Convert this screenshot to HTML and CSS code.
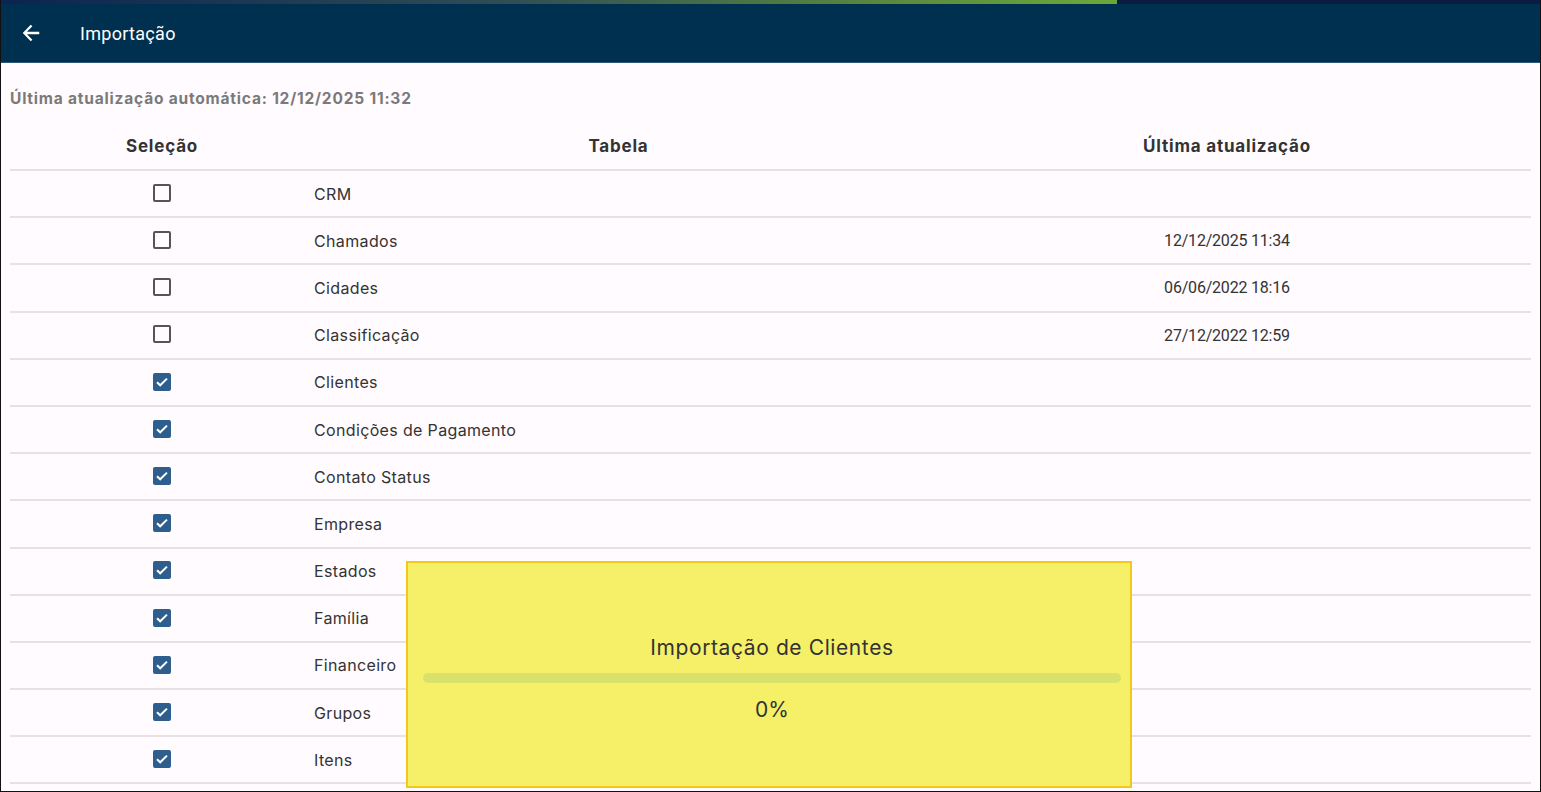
FILE: index.html
```html
<!DOCTYPE html>
<html lang="pt-BR">
<head>
<meta charset="utf-8">
<title>Importação</title>
<link rel="stylesheet" href="styles.css">
</head>
<body>
<div class="frame">
  <header class="appbar">
    <div class="loader"><div class="loader-fill"></div></div>
    <div class="appbar-row">
      <button class="back" aria-label="Voltar">
        <svg width="22" height="22" viewBox="0 0 24 24"><path d="M21 10.6H7.6l5.9-5.9L11.7 3 3 12l8.7 9 1.8-1.7-5.9-5.9H21z" fill="#fff"/></svg>
      </button>
      <h1 class="title">Importação</h1>
    </div>
  </header>
  <main class="content">
    <p class="auto-info">Última atualização automática: 12/12/2025 11:32</p>
    <table class="grid">
      <colgroup><col class="c1"><col class="c2"><col class="c3"></colgroup>
      <thead>
        <tr><th>Seleção</th><th>Tabela</th><th>Última atualização</th></tr>
      </thead>
      <tbody>
        <tr><td><span class="cb"></span></td><td>CRM</td><td></td></tr>
        <tr><td><span class="cb"></span></td><td>Chamados</td><td class="date">12/12/2025 11:34</td></tr>
        <tr><td><span class="cb"></span></td><td>Cidades</td><td class="date">06/06/2022 18:16</td></tr>
        <tr><td><span class="cb"></span></td><td>Classificação</td><td class="date">27/12/2022 12:59</td></tr>
        <tr><td><span class="cb on"><svg viewBox="0 0 18 18"><path d="M4 9.2l3.2 3.1L14 5.6" fill="none" stroke="#fff" stroke-width="2"/></svg></span></td><td>Clientes</td><td></td></tr>
        <tr><td><span class="cb on"><svg viewBox="0 0 18 18"><path d="M4 9.2l3.2 3.1L14 5.6" fill="none" stroke="#fff" stroke-width="2"/></svg></span></td><td>Condições de Pagamento</td><td></td></tr>
        <tr><td><span class="cb on"><svg viewBox="0 0 18 18"><path d="M4 9.2l3.2 3.1L14 5.6" fill="none" stroke="#fff" stroke-width="2"/></svg></span></td><td>Contato Status</td><td></td></tr>
        <tr><td><span class="cb on"><svg viewBox="0 0 18 18"><path d="M4 9.2l3.2 3.1L14 5.6" fill="none" stroke="#fff" stroke-width="2"/></svg></span></td><td>Empresa</td><td></td></tr>
        <tr><td><span class="cb on"><svg viewBox="0 0 18 18"><path d="M4 9.2l3.2 3.1L14 5.6" fill="none" stroke="#fff" stroke-width="2"/></svg></span></td><td>Estados</td><td></td></tr>
        <tr><td><span class="cb on"><svg viewBox="0 0 18 18"><path d="M4 9.2l3.2 3.1L14 5.6" fill="none" stroke="#fff" stroke-width="2"/></svg></span></td><td>Família</td><td></td></tr>
        <tr><td><span class="cb on"><svg viewBox="0 0 18 18"><path d="M4 9.2l3.2 3.1L14 5.6" fill="none" stroke="#fff" stroke-width="2"/></svg></span></td><td>Financeiro</td><td></td></tr>
        <tr><td><span class="cb on"><svg viewBox="0 0 18 18"><path d="M4 9.2l3.2 3.1L14 5.6" fill="none" stroke="#fff" stroke-width="2"/></svg></span></td><td>Grupos</td><td></td></tr>
        <tr><td><span class="cb on"><svg viewBox="0 0 18 18"><path d="M4 9.2l3.2 3.1L14 5.6" fill="none" stroke="#fff" stroke-width="2"/></svg></span></td><td>Itens</td><td></td></tr>
      </tbody>
    </table>
  </main>
  <div class="dialog">
    <p class="dialog-title">Importação de Clientes</p>
    <div class="track"></div>
    <p class="pct">0%</p>
  </div>
</div>
</body>
</html>
```

FILE: styles.css
```css
* { box-sizing: border-box; }
html, body { margin: 0; padding: 0; }
body {
  background: #fffbfe;
  font-family: Inter, Roboto, "Liberation Sans", sans-serif;
  color: #2b2b2b;
  overflow: hidden;
}
.frame {
  position: relative;
  width: 1541px;
  height: 792px;
  border: 1px solid #111;
  border-top: none;
  overflow: hidden;
  background: #fffbfe;
}
.appbar {
  background: #003050;
  height: 63px;
  border-bottom: 1px solid #2d5676;
  margin: 0 -1px;
}
.loader {
  height: 4px;
  background: #0b1c42;
}
.loader-fill {
  width: 1117px;
  height: 4px;
  background: linear-gradient(90deg, #0b2450 0%, #2f4d55 45%, #5b8a3e 80%, #6aa83a 100%);
}
.appbar-row {
  display: flex;
  align-items: center;
  height: 58px;
  padding-left: 20px;
}
.back {
  background: none;
  border: none;
  padding: 0;
  width: 22px;
  height: 22px;
  display: flex;
  margin-right: 38px;
}
.title {
  margin: 0;
  color: #fff;
  font-family: Roboto, "Liberation Sans", sans-serif;
  font-size: 18px;
  font-weight: 400;
  letter-spacing: 0.3px;
}
.content {
  padding: 0 9px;
}
.auto-info {
  margin: 26px 0 0 0;
  font-size: 15.5px;
  font-weight: 700;
  color: #7a7a7a;
  line-height: 20px;
  letter-spacing: 0.8px;
}
.grid {
  width: 100%;
  border-collapse: collapse;
  table-layout: fixed;
  margin-top: 13px;
}
.c1 { width: 304px; }
.c2 { width: 609px; }
.grid th {
  font-size: 17px;
  font-weight: 700;
  color: #333;
  height: 48px;
  text-align: center;
  padding: 0;
  letter-spacing: 0.8px;
  border-bottom: 2px solid #e4e2e6;
}
.grid td {
  height: 47.2px;
  padding: 0;
  font-size: 16px;
  color: #333;
  letter-spacing: 0.35px;
  border-bottom: 2px solid #e4e2e6;
  vertical-align: middle;
}
.grid td:first-child { text-align: center; }
.grid td:nth-child(2) { text-align: left; }
.grid td:nth-child(3) { text-align: center; }
.grid td.date {
  font-family: Roboto, "Liberation Sans", sans-serif;
  letter-spacing: -0.2px;
}
.cb {
  display: inline-block;
  width: 18px;
  height: 18px;
  border: 2px solid #555;
  border-radius: 2px;
  vertical-align: middle;
  position: relative;
  top: -2px;
}
.cb.on {
  background: #2e5e8d;
  border-color: #2e5e8d;
}
.cb.on svg {
  position: absolute;
  left: -2px;
  top: -2px;
  width: 18px;
  height: 18px;
}
.dialog {
  position: absolute;
  left: 405px;
  top: 561px;
  width: 726px;
  height: 227px;
  background: #f5f068;
  border: 2px solid #f2c81a;
  text-align: center;
  padding: 0 9px 0 15px;
}
.dialog-title {
  margin: 70px 0 0 0;
  font-size: 21px;
  line-height: 30px;
  color: #333;
  letter-spacing: 0.6px;
}
.track {
  margin: 10px 0 0 0;
  height: 10px;
  border-radius: 5px;
  background: #d8e26a;
}
.pct {
  margin: 12px 0 0 0;
  font-size: 21px;
  line-height: 30px;
  color: #333;
}
```
